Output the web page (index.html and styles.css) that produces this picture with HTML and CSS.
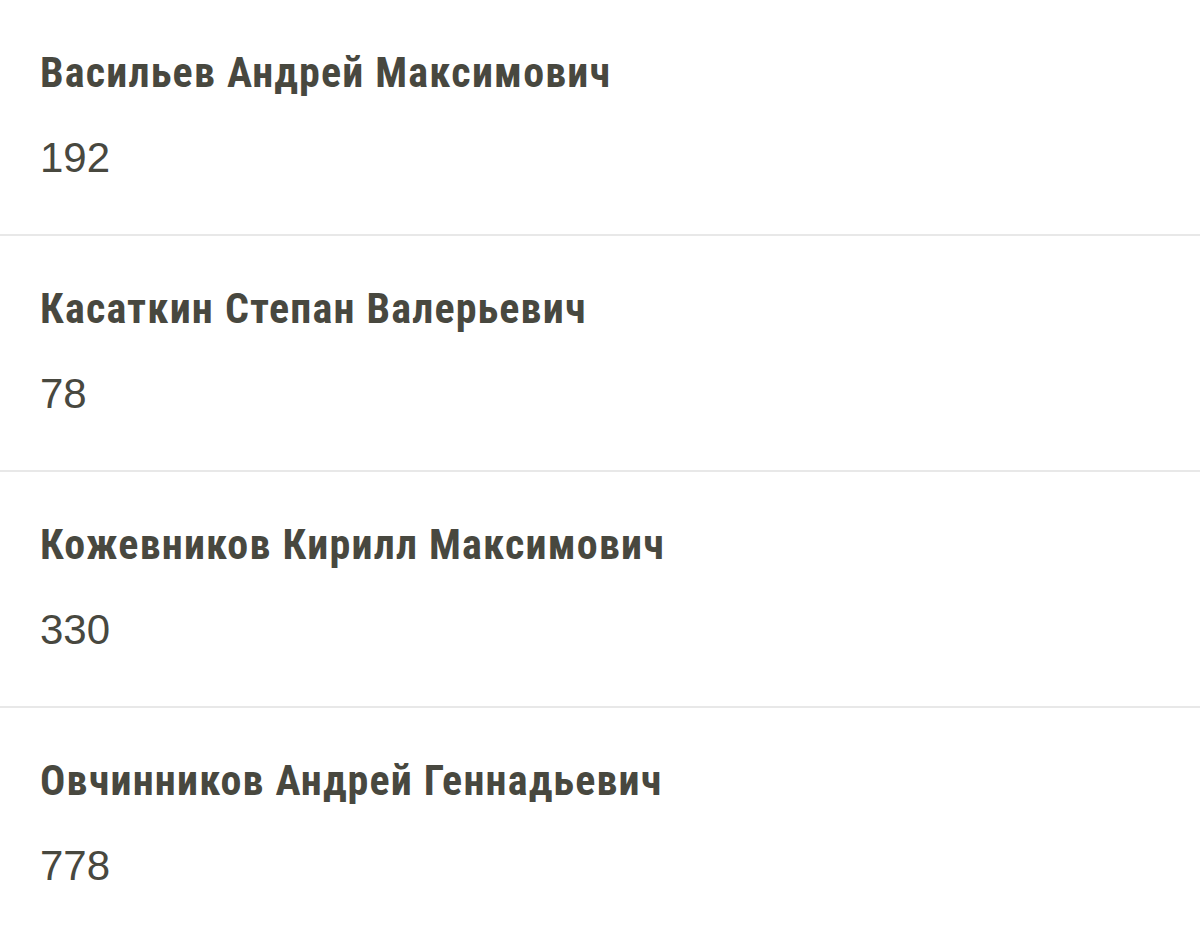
FILE: index.html
```html
<!DOCTYPE html>
<html lang="ru">
<head>
<meta charset="utf-8">
<link rel="stylesheet" href="styles.css">
</head>
<body>
<div class="card">
  <div class="row">
    <div class="name">Васильев Андрей Максимович</div>
    <div class="value">192</div>
  </div>
  <div class="row">
    <div class="name">Касаткин Степан Валерьевич</div>
    <div class="value">78</div>
  </div>
  <div class="row">
    <div class="name">Кожевников Кирилл Максимович</div>
    <div class="value">330</div>
  </div>
  <div class="row last">
    <div class="name">Овчинников Андрей Геннадьевич</div>
    <div class="value">778</div>
  </div>
</div>
</body>
</html>
```
FILE: styles.css
```css
html, body {
  margin: 0;
  padding: 0;
  background: #ffffff;
}
body {
  width: 1200px;
  height: 940px;
  overflow: hidden;
  font-family: "Liberation Sans", Arial, sans-serif;
  color: #48483f;
}
.card {
  background: #ffffff;
  border-radius: 0 0 22px 22px;
}
.row {
  display: flex;
  flex-direction: column;
  gap: 35px;
  padding: 48px 40px 51px;
  border-bottom: 2px solid #e8e8e8;
}
.row.last {
  border-bottom: none;
}
.name {
  font-family: "Roboto Condensed", "Liberation Sans Narrow", Roboto, sans-serif;
  font-weight: 700;
  font-size: 42px;
  line-height: 50px;
  letter-spacing: 1.2px;
  white-space: nowrap;
}
.value {
  font-size: 42px;
  line-height: 50px;
  font-weight: 400;
}
```
